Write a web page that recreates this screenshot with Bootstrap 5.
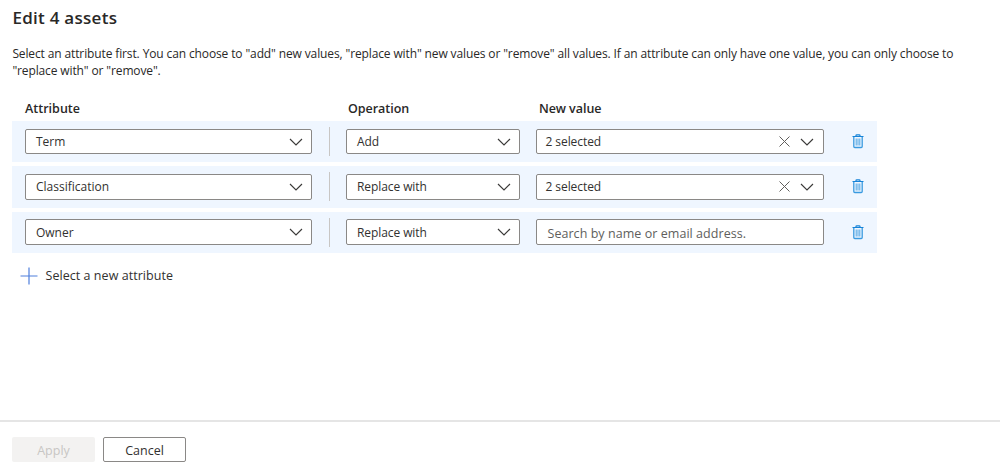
<!DOCTYPE html>
<html lang="en">
<head>
<meta charset="utf-8">
<meta name="viewport" content="width=device-width, initial-scale=1">
<title>Edit 4 assets</title>
<link href="https://cdn.jsdelivr.net/npm/bootstrap@5.3.0/dist/css/bootstrap.min.css" rel="stylesheet">
<style>
body{font-family:"Open Sans","Noto Sans",sans-serif;font-size:12px;line-height:17px;color:#323130;height:476px;overflow:hidden}
.panel-body{padding-left:12.4px}
.title{font-size:17px;line-height:22px;font-weight:550;color:#292827;padding-top:7px;letter-spacing:.27px}
.intro{margin-top:17px;line-height:16.5px;color:#292827;letter-spacing:-.124px}
.heads{height:17px;margin-top:21px;padding-left:12.5px;font-weight:600;font-size:12.5px;letter-spacing:.03px;color:#292827}
.c-attr{width:287px}.c-op{width:174px}.c-val{width:288px}
.gap-attr{width:34px}.gap-op{width:16px}
.heads .c-op{padding-left:2px;letter-spacing:-.02px}.heads .c-val{padding-left:3px;letter-spacing:-.05px}
.edit-row{width:865px;height:41.3px;margin-bottom:4px;padding-left:12.6px;background:#eff6ff}
.field{height:25.5px;background:#fff;border:1px solid #8a8886;border-radius:2px;padding:0 8px 0 10px}
.c-op.field{letter-spacing:-.08px}
.c-val.field{padding-left:8.500px;padding-right:9px;letter-spacing:-.07px}
.rule{width:1px;height:29px;background:#c8c6c4;margin-left:1px}
.clear-x{margin-right:10px}
.c-val .hint{color:#605e5c;font-size:12.5px;letter-spacing:.05px;padding:2px 0 0 2px}
.trash{margin-left:28px}
.add-new{padding:10px 0 0 7.600px}
.add-new span{margin-left:7.500px;font-size:12.5px;letter-spacing:.05px}
.foot{height:56px;border-top:2px solid #e5e5e5;padding:15px 12px 0}
.act{width:83px;height:25px;padding:0;font-size:12.5px;border-radius:2px;line-height:27px}
.act-off,.act-off:disabled{background:#f3f2f1;color:#c8c6c4;border:0;opacity:1}
.act-on{border:1px solid #8a8886;color:#323130;background:#fff;line-height:26px}
svg{display:block;flex:none;fill:none}
</style>
<script src="https://cdn.jsdelivr.net/npm/bootstrap@5.3.0/dist/js/bootstrap.bundle.min.js"></script>
</head>
<body class="d-flex flex-column bg-white">
<svg width="0" height="0" class="position-absolute">
<symbol id="chev" viewBox="0 0 14 8"><path d="M1 1l6 6 6-6" stroke="#3b3a39" stroke-width="1.15"/></symbol>
<symbol id="ex" viewBox="0 0 11 11"><path d="M.5.5l10 10M10.500.5l-10 10" stroke="#605e5c"/></symbol>
<symbol id="bin" viewBox="0 0 12 15"><path d="M1.800 3v9.500q0 1 1 1h6.400q1 0 1-1V3" stroke="#3a9ae0" stroke-width="1.300"/><path d="M.5 2.500h11M4 2.500V1.600q0-.8.8-.8h2.400q.8 0 .8.800v.9" stroke="#1683d8" stroke-width="1.200"/><path d="M4.200 4.500v7M6 4.500v7M7.800 4.500v7" stroke="#5babe5" stroke-width="1.100"/></symbol>
</svg>
<main class="flex-grow-1 panel-body">
<h1 class="title mb-0">Edit 4 assets</h1>
<p class="intro mb-0">Select an attribute first. You can choose to "add" new values, "replace with" new values or "remove" all values. If an attribute can only have one value, you can only choose to<br>"replace with" or "remove".</p>
<div class="heads d-flex"><div class="c-attr">Attribute</div><div class="gap-attr"></div><div class="c-op">Operation</div><div class="gap-op"></div><div class="c-val">New value</div></div>
<div class="rows mt-1">
<div class="edit-row d-flex align-items-center">
<div class="field c-attr d-flex align-items-center justify-content-between"><span>Term</span><svg width="14" height="8"><use href="#chev"/></svg></div>
<div class="gap-attr d-flex justify-content-center"><div class="rule"></div></div>
<div class="field c-op d-flex align-items-center justify-content-between"><span>Add</span><svg width="14" height="8"><use href="#chev"/></svg></div>
<div class="gap-op"></div>
<div class="field c-val d-flex align-items-center"><span class="me-auto">2 selected</span><svg class="clear-x" width="11" height="11"><use href="#ex"/></svg><svg width="14" height="8"><use href="#chev"/></svg></div>
<svg class="trash" width="12" height="15"><use href="#bin"/></svg>
</div>
<div class="edit-row d-flex align-items-center">
<div class="field c-attr d-flex align-items-center justify-content-between"><span>Classification</span><svg width="14" height="8"><use href="#chev"/></svg></div>
<div class="gap-attr d-flex justify-content-center"><div class="rule"></div></div>
<div class="field c-op d-flex align-items-center justify-content-between"><span>Replace with</span><svg width="14" height="8"><use href="#chev"/></svg></div>
<div class="gap-op"></div>
<div class="field c-val d-flex align-items-center"><span class="me-auto">2 selected</span><svg class="clear-x" width="11" height="11"><use href="#ex"/></svg><svg width="14" height="8"><use href="#chev"/></svg></div>
<svg class="trash" width="12" height="15"><use href="#bin"/></svg>
</div>
<div class="edit-row d-flex align-items-center">
<div class="field c-attr d-flex align-items-center justify-content-between"><span>Owner</span><svg width="14" height="8"><use href="#chev"/></svg></div>
<div class="gap-attr d-flex justify-content-center"><div class="rule"></div></div>
<div class="field c-op d-flex align-items-center justify-content-between"><span>Replace with</span><svg width="14" height="8"><use href="#chev"/></svg></div>
<div class="gap-op"></div>
<div class="field c-val d-flex align-items-center"><span class="hint">Search by name or email address.</span></div>
<svg class="trash" width="12" height="15"><use href="#bin"/></svg>
</div>
</div>
<div class="add-new d-flex align-items-center"><svg width="18" height="18" viewBox="0 0 18 18"><path d="M.5 9h17M9 .5v17" stroke="#4f7fdc" stroke-width="1.200"/></svg><span>Select a new attribute</span></div>
</main>
<footer class="foot d-flex align-items-start"><button class="btn act act-off" disabled>Apply</button><button class="btn act act-on ms-2">Cancel</button></footer>
</body>
</html>
